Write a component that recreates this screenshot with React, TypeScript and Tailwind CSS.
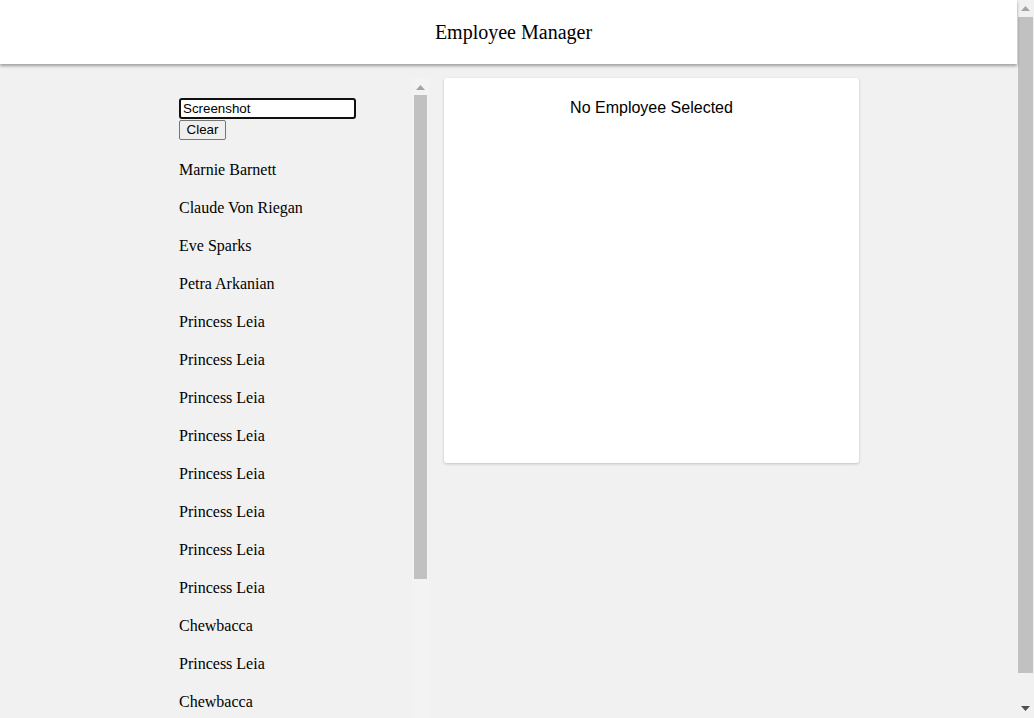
import React from 'react';

const employees = [
  'Marnie Barnett',
  'Claude Von Riegan',
  'Eve Sparks',
  'Petra Arkanian',
  'Princess Leia',
  'Princess Leia',
  'Princess Leia',
  'Princess Leia',
  'Princess Leia',
  'Princess Leia',
  'Princess Leia',
  'Princess Leia',
  'Chewbacca',
  'Princess Leia',
  'Chewbacca',
];

// little triangle for the fake scrollbars
const Arrow: React.FC<{ down?: boolean }> = ({ down }) => (
  <svg width="9" height="5" viewBox="0 0 9 5" className="block">
    {down ? <polygon points="0,0 9,0 4.5,5" fill="#505050" /> : <polygon points="0,5 9,5 4.5,0" fill="#a3a3a3" />}
  </svg>
);

const App: React.FC = () => {
  return (
    <div className="flex h-[718px] w-[1034px] overflow-hidden bg-[#f1f1f1]" style={{ fontFamily: '"Liberation Serif", serif' }}>
      {/* page */}
      <div className="flex w-[1017px] flex-col">
        {/* Header */}
        <header className="relative z-10 flex h-[64px] shrink-0 items-center justify-center bg-white pl-[10px] shadow-[0_2px_3px_rgba(0,0,0,0.35)]">
          <h1 className="text-[20px] leading-none text-black">Employee Manager</h1>
        </header>

        {/* Body */}
        <div className="flex min-h-0 flex-1 items-start gap-[15px] pl-[163px] pt-[14px]">
          {/* Employee list with its own scrollbar */}
          <div className="flex h-[640px] w-[266px] shrink-0 overflow-hidden">
            <div className="flex w-[249px] flex-col items-start pl-[16px] pt-[20px]">
              <input
                defaultValue="Screenshot"
                className="h-[21px] w-[177px] rounded-[3px] border-2 border-[#101010] bg-white px-[2px] text-[13.33px] leading-none text-black outline-none"
                style={{ fontFamily: '"Liberation Sans", Arial, sans-serif' }}
              />
              <button
                className="mt-[1px] h-[20px] w-[47px] rounded-[2px] border border-[#767676] bg-[#efefef] text-[13.33px] leading-none text-black"
                style={{ fontFamily: '"Liberation Sans", Arial, sans-serif' }}
              >
                Clear
              </button>
              <ul className="mt-[19px] flex flex-col gap-[16px]">
                {employees.map((name, i) => (
                  <li key={i} className="h-[22px] text-[16px] leading-[22px] text-black">
                    {name}
                  </li>
                ))}
              </ul>
            </div>
            <div className="flex w-[17px] flex-col items-center bg-[#f3f3f3]">
              <div className="flex h-[17px] items-center justify-center pt-[2px]">
                <Arrow />
              </div>
              <div className="h-[484px] w-[13px] bg-[#c1c1c1]" />
            </div>
          </div>

          {/* Detail card */}
          <div className="flex h-[385px] w-[415px] shrink-0 justify-center rounded-[3px] bg-white pt-[21px] shadow-[0_1px_3px_rgba(0,0,0,0.2)]">
            <p className="text-[16px] leading-[18px] text-black" style={{ fontFamily: '"Liberation Sans", Arial, sans-serif' }}>
              No Employee Selected
            </p>
          </div>
        </div>
      </div>

      {/* window scrollbar */}
      <div className="flex w-[17px] flex-col items-center bg-[#f1f1f1]">
        <div className="flex h-[17px] items-center justify-center">
          <Arrow />
        </div>
        <div className="h-[656px] w-[15px] bg-[#c1c1c1]" />
        <div className="flex-1" />
        <div className="flex h-[17px] items-center justify-center pb-[2px]">
          <Arrow down />
        </div>
      </div>
    </div>
  );
};

export default App;
